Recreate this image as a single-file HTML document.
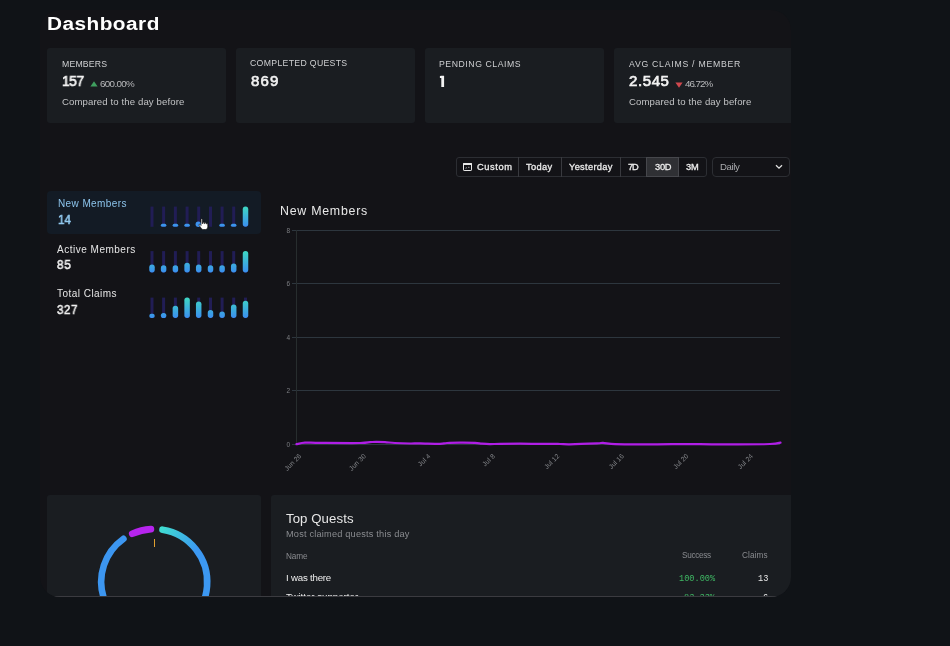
<!DOCTYPE html>
<html><head><meta charset="utf-8"><style>
html,body{margin:0;padding:0;}
body{width:950px;height:646px;overflow:hidden;background:#101317;position:relative;font-family:'Liberation Sans', sans-serif;}
#main{position:absolute;left:40px;top:10px;width:751px;height:587px;background:#131317;overflow:hidden;border-radius:20px;}
#inner{position:absolute;left:-40px;top:-10px;width:950px;height:646px;}
.t{position:absolute;white-space:nowrap;will-change:transform;}
.r{position:absolute;}
</style></head><body>
<div id="main"><div id="inner">
<div class="t" style="left:46.70px;top:14.80px;font-size:18.9px;line-height:18.9px;color:#ffffff;font-weight:700;letter-spacing:0.43px;font-family:'Liberation Sans', sans-serif;transform:scaleX(1.1);transform-origin:left center;">Dashboard</div>
<div class="r" style="left:47px;top:48px;width:179px;height:75px;background:#1a1d21;border-radius:3px;"></div>
<div class="t" style="left:61.96px;top:59.62px;font-size:8.7px;line-height:8.7px;color:#cfd0d2;font-weight:400;letter-spacing:0.186px;font-family:'Liberation Sans', sans-serif;">MEMBERS</div>
<div class="t" style="left:61.66px;top:73.20px;font-size:15.0px;line-height:15.0px;color:#f2f2f2;font-weight:400;letter-spacing:-0.48px;font-family:'Liberation Sans', sans-serif;-webkit-text-stroke:0.67px #f2f2f2;transform:scaleX(0.92);transform-origin:left center;">157</div>
<div class="r" style="left:236px;top:48px;width:179px;height:75px;background:#1a1d21;border-radius:3px;"></div>
<div class="t" style="left:250.48px;top:59.06px;font-size:8.7px;line-height:8.7px;color:#cfd0d2;font-weight:400;letter-spacing:0.331px;font-family:'Liberation Sans', sans-serif;">COMPLETED QUESTS</div>
<div class="t" style="left:250.98px;top:73.20px;font-size:15.0px;line-height:15.0px;color:#f2f2f2;font-weight:400;letter-spacing:1.16px;font-family:'Liberation Sans', sans-serif;-webkit-text-stroke:0.67px #f2f2f2;">869</div>
<div class="r" style="left:425px;top:48px;width:179px;height:75px;background:#1a1d21;border-radius:3px;"></div>
<div class="t" style="left:439.48px;top:59.62px;font-size:8.7px;line-height:8.7px;color:#cfd0d2;font-weight:400;letter-spacing:0.554px;font-family:'Liberation Sans', sans-serif;">PENDING CLAIMS</div>
<svg class="r" style="left:439px;top:75px" width="7" height="13" viewBox="0 0 7 13"><path d="M2.3 0.8 L5.1 0.8 L5.1 12 L2.3 12 L2.3 2.9 L0.9 2.9 L0.9 1.0 Z" fill="#f2f2f2"/></svg>
<div class="r" style="left:614px;top:48px;width:190px;height:75px;background:#1a1d21;border-radius:3px;"></div>
<div class="t" style="left:629.12px;top:59.62px;font-size:8.7px;line-height:8.7px;color:#cfd0d2;font-weight:400;letter-spacing:0.747px;font-family:'Liberation Sans', sans-serif;">AVG CLAIMS / MEMBER</div>
<div class="t" style="left:628.82px;top:73.20px;font-size:15.0px;line-height:15.0px;color:#f2f2f2;font-weight:400;letter-spacing:0.6px;font-family:'Liberation Sans', sans-serif;-webkit-text-stroke:0.67px #f2f2f2;">2.545</div>
<svg class="r" style="left:90px;top:80.8px" width="8" height="6"><path d="M4 0.3 L7.6 5.5 L0.4 5.5Z" fill="#3f9f5f"/></svg>
<div class="t" style="left:100.28px;top:79.10px;font-size:9.8px;line-height:9.8px;color:#b8b9bb;font-weight:400;letter-spacing:-0.649px;font-family:'Liberation Sans', sans-serif;">600.00%</div>
<div class="t" style="left:61.58px;top:96.87px;font-size:9.6px;line-height:9.6px;color:#c2c3c5;font-weight:400;letter-spacing:0.114px;font-family:'Liberation Sans', sans-serif;">Compared to the day before</div>
<svg class="r" style="left:674.5px;top:81.5px" width="8" height="6"><path d="M0.4 0.5 L7.6 0.5 L4 5.7Z" fill="#d0484e"/></svg>
<div class="t" style="left:685.36px;top:79.10px;font-size:9.8px;line-height:9.8px;color:#b8b9bb;font-weight:400;letter-spacing:-1.02px;font-family:'Liberation Sans', sans-serif;">46.72%</div>
<div class="t" style="left:629.12px;top:96.87px;font-size:9.6px;line-height:9.6px;color:#c2c3c5;font-weight:400;letter-spacing:0.11px;font-family:'Liberation Sans', sans-serif;">Compared to the day before</div>
<div class="r" style="left:455.5px;top:157px;width:251.5px;height:20px;border:1px solid #2c2e33;border-radius:3px;box-sizing:border-box;"></div>
<div class="r" style="left:518px;top:157px;width:1px;height:20px;background:#393a3f;"></div>
<div class="r" style="left:561px;top:157px;width:1px;height:20px;background:#393a3f;"></div>
<div class="r" style="left:620px;top:157px;width:1px;height:20px;background:#393a3f;"></div>
<div class="r" style="left:646px;top:157px;width:33px;height:20px;border:1px solid #46474c;background:#2f3034;box-sizing:border-box;"></div>
<svg class="r" style="left:463px;top:163px" width="9" height="8" viewBox="0 0 9 8"><rect x="0.5" y="0.5" width="8" height="7" rx="0.6" fill="none" stroke="#e8e8e8" stroke-width="1"/><rect x="0" y="0" width="9" height="2" rx="0.6" fill="#e8e8e8"/><path d="M2.5 5.3 L4 4.6 M5 4.3 L6.5 4.3" stroke="#cfcfcf" stroke-width="0.7" fill="none"/></svg>
<div class="t" style="left:476.50px;top:163.23px;font-size:9.3px;line-height:9.3px;color:#ececec;font-weight:400;letter-spacing:0.59px;font-family:'Liberation Sans', sans-serif;-webkit-text-stroke:0.30px #ececec;">Custom</div>
<div class="t" style="left:526.38px;top:163.23px;font-size:9.3px;line-height:9.3px;color:#ececec;font-weight:400;letter-spacing:0.36px;font-family:'Liberation Sans', sans-serif;-webkit-text-stroke:0.30px #ececec;">Today</div>
<div class="t" style="left:569.00px;top:163.23px;font-size:9.3px;line-height:9.3px;color:#ececec;font-weight:400;letter-spacing:0.3px;font-family:'Liberation Sans', sans-serif;-webkit-text-stroke:0.30px #ececec;">Yesterday</div>
<div class="t" style="left:628.44px;top:163.23px;font-size:9.3px;line-height:9.3px;color:#ececec;font-weight:400;letter-spacing:-1.08px;font-family:'Liberation Sans', sans-serif;-webkit-text-stroke:0.30px #ececec;">7D</div>
<div class="t" style="left:654.56px;top:163.23px;font-size:9.3px;line-height:9.3px;color:#ececec;font-weight:400;letter-spacing:-0.28px;font-family:'Liberation Sans', sans-serif;-webkit-text-stroke:0.30px #ececec;">30D</div>
<div class="t" style="left:686.44px;top:163.23px;font-size:9.3px;line-height:9.3px;color:#ececec;font-weight:400;letter-spacing:-0.28px;font-family:'Liberation Sans', sans-serif;-webkit-text-stroke:0.30px #ececec;">3M</div>
<div class="r" style="left:712px;top:157px;width:78px;height:20px;border:1px solid #2c2e33;border-radius:4px;box-sizing:border-box;"></div>
<div class="t" style="left:720.44px;top:162.37px;font-size:9.6px;line-height:9.6px;color:#a9aaad;font-weight:400;letter-spacing:-0.4px;font-family:'Liberation Sans', sans-serif;">Daily</div>
<svg class="r" style="left:774.5px;top:163.5px" width="8" height="6"><path d="M1 1.2 L4 4.2 L7 1.2" stroke="#e0e0e0" stroke-width="1.3" fill="none"/></svg>
<div class="r" style="left:47px;top:191px;width:214px;height:43px;background:#131b25;border-radius:4px;"></div>
<div class="t" style="left:57.72px;top:199.34px;font-size:10.0px;line-height:10.0px;color:#8cc4ec;font-weight:400;letter-spacing:0.402px;font-family:'Liberation Sans', sans-serif;">New Members</div>
<div class="t" style="left:57.56px;top:214.03px;font-size:12.6px;line-height:12.6px;color:#92caf0;font-weight:400;letter-spacing:0.04px;font-family:'Liberation Sans', sans-serif;-webkit-text-stroke:0.57px #92caf0;transform:scaleX(0.92);transform-origin:left center;">14</div>
<div class="t" style="left:57.20px;top:244.72px;font-size:10.0px;line-height:10.0px;color:#e6e6e6;font-weight:400;letter-spacing:0.506px;font-family:'Liberation Sans', sans-serif;">Active Members</div>
<div class="t" style="left:57.20px;top:259.23px;font-size:12.6px;line-height:12.6px;color:#f0f0f0;font-weight:400;letter-spacing:1.0px;font-family:'Liberation Sans', sans-serif;-webkit-text-stroke:0.57px #f0f0f0;transform:scaleX(0.92);transform-origin:left center;">85</div>
<div class="t" style="left:57.20px;top:289.20px;font-size:10.0px;line-height:10.0px;color:#e6e6e6;font-weight:400;letter-spacing:0.468px;font-family:'Liberation Sans', sans-serif;">Total Claims</div>
<div class="t" style="left:57.20px;top:304.43px;font-size:12.6px;line-height:12.6px;color:#f0f0f0;font-weight:400;letter-spacing:0.6px;font-family:'Liberation Sans', sans-serif;-webkit-text-stroke:0.57px #f0f0f0;transform:scaleX(0.92);transform-origin:left center;">327</div>
<div class="t" style="left:280.20px;top:204.80px;font-size:12.4px;line-height:12.4px;color:#e8e8e8;font-weight:400;letter-spacing:0.732px;font-family:'Liberation Sans', sans-serif;">New Members</div>
<div class="r" style="left:47px;top:495px;width:214px;height:120px;background:#1a1d21;border-radius:3px;"></div>
<div class="r" style="left:271px;top:495px;width:540px;height:120px;background:#1a1d21;border-radius:3px;"></div>
<div class="t" style="left:286.00px;top:511.53px;font-size:13.2px;line-height:13.2px;color:#e8e8e8;font-weight:400;letter-spacing:0.088px;font-family:'Liberation Sans', sans-serif;">Top Quests</div>
<div class="t" style="left:286.00px;top:529.81px;font-size:9.2px;line-height:9.2px;color:#8a8c90;font-weight:400;letter-spacing:0.202px;font-family:'Liberation Sans', sans-serif;">Most claimed quests this day</div>
<div class="t" style="left:286.00px;top:552.66px;font-size:8.2px;line-height:8.2px;color:#8a8c90;font-weight:400;letter-spacing:-0.067px;font-family:'Liberation Sans', sans-serif;">Name</div>
<div class="t" style="right:239.60px;text-align:right;top:552.18px;font-size:8.2px;line-height:8.2px;color:#8a8c90;font-weight:400;letter-spacing:-0.308px;font-family:'Liberation Sans', sans-serif;">Success</div>
<div class="t" style="right:182.80px;text-align:right;top:552.18px;font-size:8.2px;line-height:8.2px;color:#8a8c90;font-weight:400;letter-spacing:0.104px;font-family:'Liberation Sans', sans-serif;">Claims</div>
<div class="t" style="left:286.00px;top:573.17px;font-size:9.7px;line-height:9.7px;color:#eeeeee;font-weight:400;letter-spacing:-0.216px;font-family:'Liberation Sans', sans-serif;">I was there</div>
<div class="t" style="right:234.88px;text-align:right;top:575.21px;font-size:8.6px;line-height:8.6px;color:#3fb864;font-weight:400;letter-spacing:0px;font-family:'Liberation Mono', monospace;">100.00%</div>
<div class="t" style="right:181.88px;text-align:right;top:575.21px;font-size:8.6px;line-height:8.6px;color:#e8e8e8;font-weight:400;letter-spacing:0px;font-family:'Liberation Mono', monospace;">13</div>
<div class="t" style="left:286.00px;top:592.29px;font-size:9.7px;line-height:9.7px;color:#eeeeee;font-weight:400;letter-spacing:0.0px;font-family:'Liberation Sans', sans-serif;">Twitter supporter</div>
<div class="t" style="right:234.90px;text-align:right;top:594.01px;font-size:8.6px;line-height:8.6px;color:#3fb864;font-weight:400;letter-spacing:0px;font-family:'Liberation Mono', monospace;">83.33%</div>
<div class="t" style="right:181.90px;text-align:right;top:594.01px;font-size:8.6px;line-height:8.6px;color:#e8e8e8;font-weight:400;letter-spacing:0px;font-family:'Liberation Mono', monospace;">6</div>
<svg class="r" style="left:0;top:0" width="950" height="646"><defs><linearGradient id="bg1" x1="0" y1="0" x2="0" y2="1"><stop offset="0" stop-color="#3ed6c4"/><stop offset="1" stop-color="#3d8fef"/></linearGradient></defs>
<rect x="150.5" y="206.6" width="3" height="20.200000000000017" fill="#211d55"/>
<rect x="162.1" y="206.6" width="3" height="20.200000000000017" fill="#211d55"/>
<rect x="173.9" y="206.6" width="3" height="20.200000000000017" fill="#211d55"/>
<rect x="185.6" y="206.6" width="3" height="20.200000000000017" fill="#211d55"/>
<rect x="197.2" y="206.6" width="3" height="20.200000000000017" fill="#211d55"/>
<rect x="209.0" y="206.6" width="3" height="20.200000000000017" fill="#211d55"/>
<rect x="220.6" y="206.6" width="3" height="20.200000000000017" fill="#211d55"/>
<rect x="232.2" y="206.6" width="3" height="20.200000000000017" fill="#211d55"/>
<rect x="244.0" y="206.6" width="3" height="20.200000000000017" fill="#211d55"/>
<linearGradient id="g206_1" gradientUnits="userSpaceOnUse" x1="0" y1="206.6" x2="0" y2="226.8"><stop offset="0" stop-color="#3ed8c2"/><stop offset="1" stop-color="#3b8ef0"/></linearGradient>
<rect x="160.85" y="223.7" width="5.5" height="3.1000000000000227" rx="1.5500000000000114" fill="url(#g206_1)"/>
<linearGradient id="g206_2" gradientUnits="userSpaceOnUse" x1="0" y1="206.6" x2="0" y2="226.8"><stop offset="0" stop-color="#3ed8c2"/><stop offset="1" stop-color="#3b8ef0"/></linearGradient>
<rect x="172.65" y="223.7" width="5.5" height="3.1000000000000227" rx="1.5500000000000114" fill="url(#g206_2)"/>
<linearGradient id="g206_3" gradientUnits="userSpaceOnUse" x1="0" y1="206.6" x2="0" y2="226.8"><stop offset="0" stop-color="#3ed8c2"/><stop offset="1" stop-color="#3b8ef0"/></linearGradient>
<rect x="184.35" y="223.7" width="5.5" height="3.1000000000000227" rx="1.5500000000000114" fill="url(#g206_3)"/>
<linearGradient id="g206_6" gradientUnits="userSpaceOnUse" x1="0" y1="206.6" x2="0" y2="226.8"><stop offset="0" stop-color="#3ed8c2"/><stop offset="1" stop-color="#3b8ef0"/></linearGradient>
<rect x="219.35" y="223.7" width="5.5" height="3.1000000000000227" rx="1.5500000000000114" fill="url(#g206_6)"/>
<linearGradient id="g206_7" gradientUnits="userSpaceOnUse" x1="0" y1="206.6" x2="0" y2="226.8"><stop offset="0" stop-color="#3ed8c2"/><stop offset="1" stop-color="#3b8ef0"/></linearGradient>
<rect x="230.95" y="223.7" width="5.5" height="3.1000000000000227" rx="1.5500000000000114" fill="url(#g206_7)"/>
<linearGradient id="g206_8" gradientUnits="userSpaceOnUse" x1="0" y1="206.6" x2="0" y2="226.8"><stop offset="0" stop-color="#3ed8c2"/><stop offset="1" stop-color="#3b8ef0"/></linearGradient>
<rect x="242.75" y="206.6" width="5.5" height="20.200000000000017" rx="2.75" fill="url(#g206_8)"/>
<circle cx="198.3" cy="224.2" r="2.7" fill="#3d92ee"/>
<rect x="150.5" y="251.1" width="3" height="21.50000000000003" fill="#211d55"/>
<rect x="162.1" y="251.1" width="3" height="21.50000000000003" fill="#211d55"/>
<rect x="173.9" y="251.1" width="3" height="21.50000000000003" fill="#211d55"/>
<rect x="185.6" y="251.1" width="3" height="21.50000000000003" fill="#211d55"/>
<rect x="197.2" y="251.1" width="3" height="21.50000000000003" fill="#211d55"/>
<rect x="209.0" y="251.1" width="3" height="21.50000000000003" fill="#211d55"/>
<rect x="220.6" y="251.1" width="3" height="21.50000000000003" fill="#211d55"/>
<rect x="232.2" y="251.1" width="3" height="21.50000000000003" fill="#211d55"/>
<rect x="244.0" y="251.1" width="3" height="21.50000000000003" fill="#211d55"/>
<linearGradient id="g251_0" gradientUnits="userSpaceOnUse" x1="0" y1="251.1" x2="0" y2="272.6"><stop offset="0" stop-color="#3ed8c2"/><stop offset="1" stop-color="#3b8ef0"/></linearGradient>
<rect x="149.25" y="264.6" width="5.5" height="8.0" rx="2.75" fill="url(#g251_0)"/>
<linearGradient id="g251_1" gradientUnits="userSpaceOnUse" x1="0" y1="251.1" x2="0" y2="272.6"><stop offset="0" stop-color="#3ed8c2"/><stop offset="1" stop-color="#3b8ef0"/></linearGradient>
<rect x="160.85" y="265.3" width="5.5" height="7.300000000000011" rx="2.75" fill="url(#g251_1)"/>
<linearGradient id="g251_2" gradientUnits="userSpaceOnUse" x1="0" y1="251.1" x2="0" y2="272.6"><stop offset="0" stop-color="#3ed8c2"/><stop offset="1" stop-color="#3b8ef0"/></linearGradient>
<rect x="172.65" y="265.3" width="5.5" height="7.300000000000011" rx="2.75" fill="url(#g251_2)"/>
<linearGradient id="g251_3" gradientUnits="userSpaceOnUse" x1="0" y1="251.1" x2="0" y2="272.6"><stop offset="0" stop-color="#3ed8c2"/><stop offset="1" stop-color="#3b8ef0"/></linearGradient>
<rect x="184.35" y="262.7" width="5.5" height="9.900000000000034" rx="2.75" fill="url(#g251_3)"/>
<linearGradient id="g251_4" gradientUnits="userSpaceOnUse" x1="0" y1="251.1" x2="0" y2="272.6"><stop offset="0" stop-color="#3ed8c2"/><stop offset="1" stop-color="#3b8ef0"/></linearGradient>
<rect x="195.95" y="264.6" width="5.5" height="8.0" rx="2.75" fill="url(#g251_4)"/>
<linearGradient id="g251_5" gradientUnits="userSpaceOnUse" x1="0" y1="251.1" x2="0" y2="272.6"><stop offset="0" stop-color="#3ed8c2"/><stop offset="1" stop-color="#3b8ef0"/></linearGradient>
<rect x="207.75" y="265.3" width="5.5" height="7.300000000000011" rx="2.75" fill="url(#g251_5)"/>
<linearGradient id="g251_6" gradientUnits="userSpaceOnUse" x1="0" y1="251.1" x2="0" y2="272.6"><stop offset="0" stop-color="#3ed8c2"/><stop offset="1" stop-color="#3b8ef0"/></linearGradient>
<rect x="219.35" y="265.3" width="5.5" height="7.300000000000011" rx="2.75" fill="url(#g251_6)"/>
<linearGradient id="g251_7" gradientUnits="userSpaceOnUse" x1="0" y1="251.1" x2="0" y2="272.6"><stop offset="0" stop-color="#3ed8c2"/><stop offset="1" stop-color="#3b8ef0"/></linearGradient>
<rect x="230.95" y="263.4" width="5.5" height="9.200000000000045" rx="2.75" fill="url(#g251_7)"/>
<linearGradient id="g251_8" gradientUnits="userSpaceOnUse" x1="0" y1="251.1" x2="0" y2="272.6"><stop offset="0" stop-color="#3ed8c2"/><stop offset="1" stop-color="#3b8ef0"/></linearGradient>
<rect x="242.75" y="251.1" width="5.5" height="21.50000000000003" rx="2.75" fill="url(#g251_8)"/>
<rect x="150.5" y="297.6" width="3" height="20.5" fill="#211d55"/>
<rect x="162.1" y="297.6" width="3" height="20.5" fill="#211d55"/>
<rect x="173.9" y="297.6" width="3" height="20.5" fill="#211d55"/>
<rect x="185.6" y="297.6" width="3" height="20.5" fill="#211d55"/>
<rect x="197.2" y="297.6" width="3" height="20.5" fill="#211d55"/>
<rect x="209.0" y="297.6" width="3" height="20.5" fill="#211d55"/>
<rect x="220.6" y="297.6" width="3" height="20.5" fill="#211d55"/>
<rect x="232.2" y="297.6" width="3" height="20.5" fill="#211d55"/>
<rect x="244.0" y="297.6" width="3" height="20.5" fill="#211d55"/>
<linearGradient id="g297_0" gradientUnits="userSpaceOnUse" x1="0" y1="297.6" x2="0" y2="318.1"><stop offset="0" stop-color="#3ed8c2"/><stop offset="1" stop-color="#3b8ef0"/></linearGradient>
<rect x="149.25" y="313.8" width="5.5" height="4.300000000000011" rx="2.1500000000000057" fill="url(#g297_0)"/>
<linearGradient id="g297_1" gradientUnits="userSpaceOnUse" x1="0" y1="297.6" x2="0" y2="318.1"><stop offset="0" stop-color="#3ed8c2"/><stop offset="1" stop-color="#3b8ef0"/></linearGradient>
<rect x="160.85" y="313" width="5.5" height="5.100000000000023" rx="2.5500000000000114" fill="url(#g297_1)"/>
<linearGradient id="g297_2" gradientUnits="userSpaceOnUse" x1="0" y1="297.6" x2="0" y2="318.1"><stop offset="0" stop-color="#3ed8c2"/><stop offset="1" stop-color="#3b8ef0"/></linearGradient>
<rect x="172.65" y="305.8" width="5.5" height="12.300000000000011" rx="2.75" fill="url(#g297_2)"/>
<linearGradient id="g297_3" gradientUnits="userSpaceOnUse" x1="0" y1="297.6" x2="0" y2="318.1"><stop offset="0" stop-color="#3ed8c2"/><stop offset="1" stop-color="#3b8ef0"/></linearGradient>
<rect x="184.35" y="297.6" width="5.5" height="20.5" rx="2.75" fill="url(#g297_3)"/>
<linearGradient id="g297_4" gradientUnits="userSpaceOnUse" x1="0" y1="297.6" x2="0" y2="318.1"><stop offset="0" stop-color="#3ed8c2"/><stop offset="1" stop-color="#3b8ef0"/></linearGradient>
<rect x="195.95" y="301.4" width="5.5" height="16.700000000000045" rx="2.75" fill="url(#g297_4)"/>
<linearGradient id="g297_5" gradientUnits="userSpaceOnUse" x1="0" y1="297.6" x2="0" y2="318.1"><stop offset="0" stop-color="#3ed8c2"/><stop offset="1" stop-color="#3b8ef0"/></linearGradient>
<rect x="207.75" y="310" width="5.5" height="8.100000000000023" rx="2.75" fill="url(#g297_5)"/>
<linearGradient id="g297_6" gradientUnits="userSpaceOnUse" x1="0" y1="297.6" x2="0" y2="318.1"><stop offset="0" stop-color="#3ed8c2"/><stop offset="1" stop-color="#3b8ef0"/></linearGradient>
<rect x="219.35" y="311.5" width="5.5" height="6.600000000000023" rx="2.75" fill="url(#g297_6)"/>
<linearGradient id="g297_7" gradientUnits="userSpaceOnUse" x1="0" y1="297.6" x2="0" y2="318.1"><stop offset="0" stop-color="#3ed8c2"/><stop offset="1" stop-color="#3b8ef0"/></linearGradient>
<rect x="230.95" y="304.6" width="5.5" height="13.5" rx="2.75" fill="url(#g297_7)"/>
<linearGradient id="g297_8" gradientUnits="userSpaceOnUse" x1="0" y1="297.6" x2="0" y2="318.1"><stop offset="0" stop-color="#3ed8c2"/><stop offset="1" stop-color="#3b8ef0"/></linearGradient>
<rect x="242.75" y="300.8" width="5.5" height="17.30000000000001" rx="2.75" fill="url(#g297_8)"/>
<line x1="292" y1="230.5" x2="780" y2="230.5" stroke="#2d363e" stroke-width="1"/>
<line x1="292" y1="283.5" x2="780" y2="283.5" stroke="#2d363e" stroke-width="1"/>
<line x1="292" y1="337.5" x2="780" y2="337.5" stroke="#2d363e" stroke-width="1"/>
<line x1="292" y1="390.5" x2="780" y2="390.5" stroke="#2d363e" stroke-width="1"/>
<line x1="292" y1="444.5" x2="780" y2="444.5" stroke="#2d363e" stroke-width="1"/>
<line x1="296.5" y1="230" x2="296.5" y2="444.5" stroke="#272d2e" stroke-width="1"/>
<text x="290" y="232.8" font-size="6.5" fill="#7d7f83" text-anchor="end" font-family="Liberation Sans">8</text>
<text x="290" y="285.8" font-size="6.5" fill="#7d7f83" text-anchor="end" font-family="Liberation Sans">6</text>
<text x="290" y="339.8" font-size="6.5" fill="#7d7f83" text-anchor="end" font-family="Liberation Sans">4</text>
<text x="290" y="392.8" font-size="6.5" fill="#7d7f83" text-anchor="end" font-family="Liberation Sans">2</text>
<text x="290" y="446.8" font-size="6.5" fill="#7d7f83" text-anchor="end" font-family="Liberation Sans">0</text>
<text transform="translate(301.8,456.5) rotate(-45)" font-size="6.7" letter-spacing="0.1" fill="#85878b" text-anchor="end" font-family="Liberation Sans">Jun 26</text>
<text transform="translate(366.3333333333333,456.5) rotate(-45)" font-size="6.7" letter-spacing="0.1" fill="#85878b" text-anchor="end" font-family="Liberation Sans">Jun 30</text>
<text transform="translate(430.8666666666667,456.5) rotate(-45)" font-size="6.7" letter-spacing="0.1" fill="#85878b" text-anchor="end" font-family="Liberation Sans">Jul 4</text>
<text transform="translate(495.40000000000003,456.5) rotate(-45)" font-size="6.7" letter-spacing="0.1" fill="#85878b" text-anchor="end" font-family="Liberation Sans">Jul 8</text>
<text transform="translate(559.9333333333333,456.5) rotate(-45)" font-size="6.7" letter-spacing="0.1" fill="#85878b" text-anchor="end" font-family="Liberation Sans">Jul 12</text>
<text transform="translate(624.4666666666667,456.5) rotate(-45)" font-size="6.7" letter-spacing="0.1" fill="#85878b" text-anchor="end" font-family="Liberation Sans">Jul 16</text>
<text transform="translate(689.0,456.5) rotate(-45)" font-size="6.7" letter-spacing="0.1" fill="#85878b" text-anchor="end" font-family="Liberation Sans">Jul 20</text>
<text transform="translate(753.5333333333333,456.5) rotate(-45)" font-size="6.7" letter-spacing="0.1" fill="#85878b" text-anchor="end" font-family="Liberation Sans">Jul 24</text>
<path d="M296.50 444.20 C297.92 443.95 301.08 442.92 305.00 442.70 C308.92 442.48 310.83 442.85 320.00 442.90 C329.17 442.95 351.67 443.12 360.00 443.00 C368.33 442.88 367.33 442.40 370.00 442.20 C372.67 442.00 373.50 441.82 376.00 441.80 C378.50 441.78 381.83 441.90 385.00 442.10 C388.17 442.30 390.83 442.77 395.00 443.00 C399.17 443.23 405.83 443.43 410.00 443.50 C414.17 443.57 415.00 443.33 420.00 443.40 C425.00 443.47 435.50 443.97 440.00 443.90 C444.50 443.83 443.67 443.20 447.00 443.00 C450.33 442.80 455.33 442.72 460.00 442.70 C464.67 442.68 471.33 442.73 475.00 442.90 C478.67 443.07 479.50 443.50 482.00 443.70 C484.50 443.90 487.00 444.08 490.00 444.10 C493.00 444.12 495.00 443.87 500.00 443.80 C505.00 443.73 512.33 443.68 520.00 443.70 C527.67 443.72 539.33 443.85 546.00 443.90 C552.67 443.95 556.00 443.93 560.00 444.00 C564.00 444.07 563.83 444.40 570.00 444.30 C576.17 444.20 591.50 443.63 597.00 443.40 C602.50 443.17 600.00 442.78 603.00 442.90 C606.00 443.02 608.83 443.85 615.00 444.10 C621.17 444.35 630.50 444.38 640.00 444.40 C649.50 444.42 662.00 444.23 672.00 444.20 C682.00 444.17 690.33 444.17 700.00 444.20 C709.67 444.23 718.33 444.43 730.00 444.40 C741.67 444.37 761.58 444.30 770.00 444.00 C778.42 443.70 778.75 442.83 780.50 442.60" stroke="#b01ee6" stroke-width="2.2" fill="none" stroke-linecap="round"/>
</svg>
<svg class="r" style="left:0;top:0" width="950" height="646"><defs><linearGradient id="dg" gradientUnits="userSpaceOnUse" x1="160" y1="527" x2="195" y2="552"><stop offset="0" stop-color="#40e0d0"/><stop offset="1" stop-color="#3c98f2"/></linearGradient></defs>
<path d="M132.22 533.77 A53 53 0 0 1 150.96 529.10" stroke="#b624ee" stroke-width="6.6" stroke-linecap="round" fill="none"/>
<path d="M162.49 529.65 A53 53 0 0 1 154.20 635.00" stroke="url(#dg)" stroke-width="6.6" stroke-linecap="round" fill="none"/>
<path d="M154.20 635.00 A53 53 0 0 1 123.42 538.85" stroke="#3c96f0" stroke-width="6.6" stroke-linecap="round" fill="none"/>
<line x1="154.5" y1="539" x2="154.5" y2="547" stroke="#e0a030" stroke-width="1"/>
</svg>
<div class="r" style="left:54px;top:596px;width:724px;height:1px;background:#3b3b40"></div>
<svg class="r" style="left:197.7px;top:218.4px" width="12" height="13" viewBox="0 0 12 13"><path d="M3 1.2 C3 0.5 4.4 0.5 4.4 1.2 L4.4 5.5 L5 5.5 L5 4.6 C5 4 6.3 4 6.3 4.6 L6.3 5.6 L6.8 5.6 L6.8 5 C6.8 4.4 8.1 4.4 8.1 5 L8.1 5.8 L8.6 5.8 C8.6 5.3 9.8 5.3 9.8 5.9 L9.8 8.5 C9.8 10 9 11.5 7.5 11.5 L5.2 11.5 C4.2 11.5 3.6 10.8 3 10 L1 7.2 C0.6 6.6 1.4 6 2 6.5 L3 7.5 Z" fill="#fff" stroke="#111" stroke-width="0.7"/></svg>
</div></div>
</body></html>
